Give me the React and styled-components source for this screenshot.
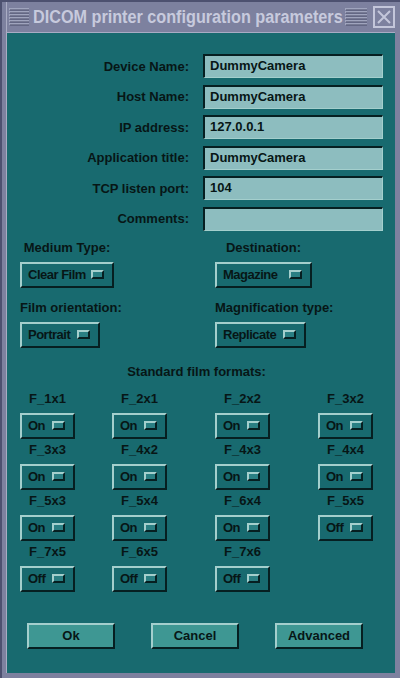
import React from "react";
import styled, { createGlobalStyle } from "styled-components";

const C = {
  frame: "#7d819f",
  frameLight: "#a9acc4",
  frameDark: "#4d5170",
  titleText: "#c7cadd",
  teal: "#186a6f",
  field: "#8dbdbf",
  btn: "#3e9793",
  light: "#a4cfcd",
  dark: "#061f21",
  text: "#071616",
};

const Global = createGlobalStyle`
  html, body { margin: 0; padding: 0; background: ${C.frame}; }
  body { font-family: "Liberation Sans", Arial, sans-serif; }
`;

const Window = styled.div`
  width: 400px;
  height: 678px;
  box-sizing: border-box;
  background: ${C.frame};
  border-top: 2px solid ${C.frameDark};
  border-left: 2px solid ${C.frameDark};
  padding: 0 5px 5px 4px;
  display: flex;
  flex-direction: column;
`;

const TitleBar = styled.div`
  height: 30px;
  display: flex;
  align-items: center;
  border-left: 1px solid ${C.frameLight};
  padding-left: 2px;
  flex: none;
`;

const Title = styled.div`
  flex: 1;
  color: ${C.titleText};
  font-weight: bold;
  font-size: 18px;
  white-space: nowrap;
  transform-origin: left center;
  transform: scaleX(${(p) => p.$sx});
  margin-left: 4px;
  width: 0;
`;

const CloseBox = styled.svg`
  flex: none;
  margin-left: 6px;
`;

const Body = styled.div`
  flex: 1;
  background: ${C.teal};
  border-top: 1px solid ${C.frameLight};
  border-left: 1px solid ${C.frameLight};
  display: flex;
  flex-direction: column;
  padding-top: 21px;
  color: ${C.text};
  font-weight: bold;
  font-size: 13px;
`;

const FieldGrid = styled.div`
  display: grid;
  grid-template-columns: 182px 180px;
  column-gap: 14px;
  row-gap: 6.6px;
  align-items: center;
`;

const Label = styled.div`
  text-align: right;
  line-height: 15px;
`;

const Field = styled.div`
  height: 24px;
  box-sizing: border-box;
  background: ${C.field};
  border-top: 2px solid ${C.dark};
  border-left: 2px solid ${C.dark};
  border-bottom: 1px solid ${C.light};
  border-right: 1px solid ${C.light};
  padding-left: 5px;
  line-height: 20px;
  white-space: nowrap;
`;

const OptionsGrid = styled.div`
  margin-top: 9px;
  display: grid;
  grid-template-columns: 195px 1fr;
  row-gap: 12px;
  padding-left: 13px;
`;

const OptionCell = styled.div`
  display: grid;
  width: max-content;
  row-gap: 7px;
`;

const CenterLabel = styled.div`
  text-align: center;
  line-height: 15px;
  white-space: nowrap;
`;

const OptionButton = styled.div`
  justify-self: start;
  height: 26px;
  box-sizing: border-box;
  width: ${(p) => `${p.$w}px`};
  display: flex;
  align-items: center;
  justify-content: space-between;
  padding: 0 8px 0 6px;
  background: ${C.teal};
  border-top: 2px solid ${C.light};
  border-left: 2px solid ${C.light};
  border-bottom: 2px solid ${C.dark};
  border-right: 2px solid ${C.dark};
  white-space: nowrap;
`;

const OptionText = styled.span`
  letter-spacing: -0.5px;
`;

const Indicator = styled.span`
  flex: none;
  width: 13px;
  height: 9px;
  box-sizing: border-box;
  background: #2a7f83;
  border-top: 2px solid ${C.light};
  border-left: 2px solid ${C.light};
  border-bottom: 2px solid ${C.dark};
  border-right: 2px solid ${C.dark};
`;

const SectionTitle = styled.div`
  margin-top: 16px;
  text-align: center;
  line-height: 15px;
  padding-right: 9px;
`;

const FormatGrid = styled.div`
  margin-top: 12px;
  display: grid;
  grid-template-columns: 92px 103px 103px 55px;
  row-gap: 3px;
  padding-left: 13px;
`;

const FormatCell = styled.div`
  display: grid;
  width: 55px;
  row-gap: 7px;
`;

const ButtonRow = styled.div`
  margin-top: 31px;
  display: flex;
  gap: 36px;
  padding-left: 20px;
`;

const PushButton = styled.div`
  width: 88px;
  height: 26px;
  box-sizing: border-box;
  background: ${C.btn};
  border-top: 2px solid ${C.light};
  border-left: 2px solid ${C.light};
  border-bottom: 2px solid ${C.dark};
  border-right: 2px solid ${C.dark};
  display: flex;
  align-items: center;
  justify-content: center;
`;

const MenuLines = ({ w = 20 }) => (
  <svg width={w} height="18" viewBox={`0 0 ${w} 18`} style={{ flex: "none" }}>
    {[1, 4, 7, 10, 13, 16].map((y) => (
      <g key={y}>
        <line x1="0" y1={y} x2={w} y2={y} stroke="#c3c6da" strokeWidth="1" />
        <line x1="1" y1={y + 1} x2={w} y2={y + 1} stroke="#4a4e6a" strokeWidth="1" />
      </g>
    ))}
  </svg>
);

const fields = [
  ["Device Name:", "DummyCamera"],
  ["Host Name:", "DummyCamera"],
  ["IP address:", "127.0.0.1"],
  ["Application title:", "DummyCamera"],
  ["TCP listen port:", "104"],
  ["Comments:", ""],
];

const options = [
  ["Medium Type:", "Clear Film", 94],
  ["Destination:", "Magazine", 97],
  ["Film orientation:", "Portrait", 80],
  ["Magnification type:", "Replicate", 91],
];

const formats = [
  ["F_1x1", "On"], ["F_2x1", "On"], ["F_2x2", "On"], ["F_3x2", "On"],
  ["F_3x3", "On"], ["F_4x2", "On"], ["F_4x3", "On"], ["F_4x4", "On"],
  ["F_5x3", "On"], ["F_5x4", "On"], ["F_6x4", "On"], ["F_5x5", "Off"],
  ["F_7x5", "Off"], ["F_6x5", "Off"], ["F_7x6", "Off"],
];

export default function App() {
  return (
    <>
      <Global />
      <Window>
        <TitleBar>
          <MenuLines />
          <Title $sx={0.9}>DICOM printer configuration parameters</Title>
          <MenuLines w={22} />
          <CloseBox width="22" height="22" viewBox="0 0 22 22">
            <rect x="1" y="1" width="20" height="20" fill="none" stroke="#c3c6da" strokeWidth="2" />
            <path d="M5 5 L17 17 M17 5 L5 17" stroke="#c3c6da" strokeWidth="2" />
          </CloseBox>
        </TitleBar>
        <Body>
          <FieldGrid>
            {fields.map(([l, v]) => (
              <React.Fragment key={l}>
                <Label>{l}</Label>
                <Field>{v}</Field>
              </React.Fragment>
            ))}
          </FieldGrid>
          <OptionsGrid>
            {options.map(([l, v, w]) => (
              <OptionCell key={l}>
                <CenterLabel>{l}</CenterLabel>
                <OptionButton $w={w}>
                  <OptionText>{v}</OptionText>
                  <Indicator />
                </OptionButton>
              </OptionCell>
            ))}
          </OptionsGrid>
          <SectionTitle>Standard film formats:</SectionTitle>
          <FormatGrid>
            {formats.map(([l, v]) => (
              <FormatCell key={l}>
                <CenterLabel>{l}</CenterLabel>
                <OptionButton $w={55}>
                  <OptionText>{v}</OptionText>
                  <Indicator />
                </OptionButton>
              </FormatCell>
            ))}
          </FormatGrid>
          <ButtonRow>
            <PushButton>Ok</PushButton>
            <PushButton>Cancel</PushButton>
            <PushButton>Advanced</PushButton>
          </ButtonRow>
        </Body>
      </Window>
    </>
  );
}
